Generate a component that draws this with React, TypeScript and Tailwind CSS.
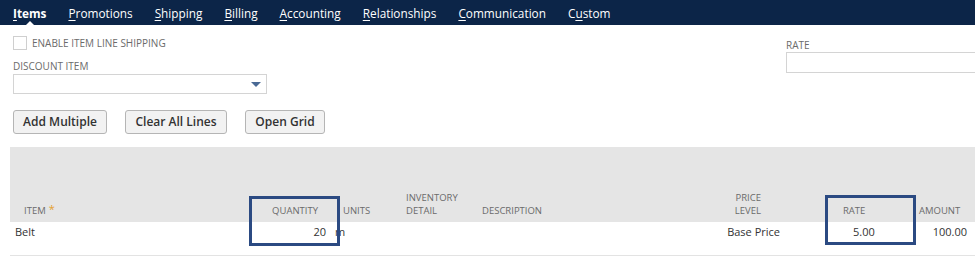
import React from 'react';

const tabs = [
  { pre: '', key: 'I', post: 'tems', active: true },
  { pre: '', key: 'P', post: 'romotions' },
  { pre: '', key: 'S', post: 'hipping' },
  { pre: '', key: 'B', post: 'illing' },
  { pre: '', key: 'A', post: 'ccounting' },
  { pre: '', key: 'R', post: 'elationships' },
  { pre: '', key: 'C', post: 'ommunication' },
  { pre: 'C', key: 'u', post: 'stom' },
];

export default function App() {
  return (
    <div className="relative w-[975px] h-[257px] overflow-hidden bg-white font-['Open_Sans',sans-serif]">
      {/* Subtab bar */}
      <div className="flex h-[25px] items-center gap-[22px] bg-[#0c2548] pl-[13px] text-[11.8px] text-white">
        {tabs.map((t) => (
          <span key={t.key} className={`relative pt-[1px] leading-[24px] ${t.active ? 'font-bold' : ''}`}>
            {t.pre}
            <u className="underline-offset-2">{t.key}</u>
            {t.post}
            {t.active && (
              <span className="absolute bottom-0 left-1/2 -translate-x-1/2 border-x-[4px] border-b-[4px] border-x-transparent border-b-white" />
            )}
          </span>
        ))}
      </div>

      {/* Fields */}
      <div className="flex px-[13px] pt-[11px]">
        <div className="flex w-[254px] flex-col">
          <div className="flex h-[14px] items-center gap-[5px]">
            <div className="h-[14px] w-[14px] border border-[#cfcfcf] bg-white" />
            <span className="text-[10px] uppercase leading-[14px] text-[#6b6b6b]">Enable Item Line Shipping</span>
          </div>
          <div className="mt-[10px] text-[10px] uppercase leading-[12px] text-[#6b6b6b]">Discount Item</div>
          <div className="mt-[2px] flex h-[20px] items-center justify-end border border-[#d4d4d4] bg-white pr-[5px]">
            <svg width="10" height="5" viewBox="0 0 10 5">
              <polygon points="0,0 10,0 5,5" fill="#4a6a95" />
            </svg>
          </div>
        </div>
        <div className="ml-auto -mr-[20px] flex w-[196px] flex-col pt-[3px]">
          <div className="text-[10px] uppercase leading-[12px] text-[#6b6b6b]">Rate</div>
          <div className="mt-[1px] h-[21px] border border-[#d4d4d4] bg-white" />
        </div>
      </div>

      {/* Buttons */}
      <div className="mt-[16px] flex gap-[18px] px-[13px]">
        {['Add Multiple', 'Clear All Lines', 'Open Grid'].map((b, i) => (
          <button
            key={b}
            className={`h-[24px] rounded-[3px] border border-[#b5b5b5] bg-[#f2f2f2] text-[12px] font-semibold text-[#333] ${
              i === 0 ? 'w-[94px]' : i === 1 ? 'w-[102px]' : 'w-[80px]'
            }`}
          >
            {b}
          </button>
        ))}
      </div>

      {/* Item sublist */}
      <div className="mt-[13px] pl-[10px]">
        <div className="flex h-[75px] items-end bg-[#e5e5e5] pb-[5px] text-[9.5px] uppercase leading-[13px] text-[#6b6b6b]">
          <div className="w-[240px] pl-[14px]">
            Item<span className="ml-[3px] align-top text-[11px] leading-[10px] text-[#e4a02f]">*</span>
          </div>
          <div className="w-[80px] pr-[12px] text-right">Quantity</div>
          <div className="w-[70px] pl-[13px]">Units</div>
          <div className="w-[76px] pl-[6px]">
            Inventory
            <br />
            Detail
          </div>
          <div className="w-[224px] pl-[6px]">Description</div>
          <div className="w-[90px] pr-[29px] text-right">
            Price
            <br />
            Level
          </div>
          <div className="w-[110px] pl-[53px]">Rate</div>
          <div className="w-[75px] pl-[19px]">Amount</div>
        </div>
        <div className="flex h-[34px] border-b border-[#e3e3e3] pt-[3px] text-[11px] leading-[14px] text-[#333]">
          <div className="w-[240px] pl-[5px]">Belt</div>
          <div className="w-[80px] pr-[4px] text-right">20</div>
          <div className="w-[70px] pl-[5px]">m</div>
          <div className="w-[76px]" />
          <div className="w-[224px]" />
          <div className="w-[90px] pr-[10px] text-right">Base Price</div>
          <div className="w-[110px] pl-[63px]">5.00</div>
          <div className="w-[75px] pr-[8px] text-right">100.00</div>
        </div>
      </div>

      {/* Highlight annotations */}
      <div className="pointer-events-none absolute left-[249px] top-[196px] h-[50px] w-[91px] border-[3px] border-[#2b4a82]" />
      <div className="pointer-events-none absolute left-[825px] top-[195px] h-[50px] w-[91px] border-[3px] border-[#2b4a82]" />
    </div>
  );
}
